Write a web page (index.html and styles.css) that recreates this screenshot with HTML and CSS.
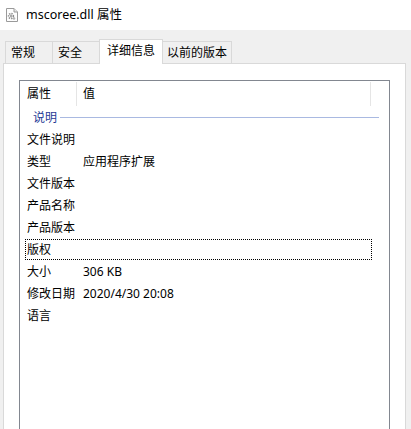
FILE: index.html
```html
<!DOCTYPE html>
<html lang="zh-CN">
<head>
<meta charset="utf-8">
<title>mscoree.dll 属性</title>
<link rel="stylesheet" href="styles.css">
</head>
<body>
<div class="window">
  <div class="titlebar">
    <svg class="appicon" width="12" height="14" viewBox="0 0 12 14">
      <path d="M0.5 0.5 H8 L11.5 4 V13.5 H0.5 Z" fill="#fdfdfd" stroke="#9a9a9a"/>
      <path d="M8 0.5 V4 H11.5" fill="#e8e8e8" stroke="#9a9a9a"/>
      <circle cx="5" cy="8" r="2.4" fill="none" stroke="#8c8c8c" stroke-width="1.6" stroke-dasharray="1.2 0.9"/>
      <circle cx="5" cy="8" r="1.2" fill="#a8a8a8"/>
      <circle cx="8" cy="10.5" r="1.3" fill="#b4b4b4"/>
    </svg>
    <span class="title">mscoree.dll 属性</span>
  </div>
  <div class="tabs">
    <div class="tab t1">常规</div>
    <div class="tab t2">安全</div>
    <div class="tab t3 active">详细信息</div>
    <div class="tab t4">以前的版本</div>
  </div>
  <div class="panel">
    <div class="listview">
      <div class="lv-header">
        <div class="hcell hc1">属性</div>
        <div class="hcell hc2">值</div>
      </div>
      <div class="group">
        <span class="glabel">说明</span>
        <span class="gline"></span>
      </div>
      <div class="row"><div class="item"><span class="c1">文件说明</span><span class="c2"></span></div></div>
      <div class="row"><div class="item"><span class="c1">类型</span><span class="c2">应用程序扩展</span></div></div>
      <div class="row"><div class="item"><span class="c1">文件版本</span><span class="c2"></span></div></div>
      <div class="row"><div class="item"><span class="c1">产品名称</span><span class="c2"></span></div></div>
      <div class="row"><div class="item"><span class="c1">产品版本</span><span class="c2"></span></div></div>
      <div class="row"><div class="item focused"><span class="c1">版权</span><span class="c2"></span></div></div>
      <div class="row"><div class="item"><span class="c1">大小</span><span class="c2">306 KB</span></div></div>
      <div class="row"><div class="item"><span class="c1">修改日期</span><span class="c2">2020/4/30 20:08</span></div></div>
      <div class="row"><div class="item"><span class="c1">语言</span><span class="c2"></span></div></div>
    </div>
  </div>
</div>
</body>
</html>
```
FILE: styles.css
```css
html, body {
  margin: 0;
  padding: 0;
}
body {
  width: 411px;
  height: 429px;
  overflow: hidden;
  background: #f0f0f0;
  font-family: "Segoe UI", "Noto Sans", "Noto Sans CJK SC", sans-serif;
  font-size: 12px;
  color: #000;
}
.window {
  display: flex;
  flex-direction: column;
  height: 429px;
}
.titlebar {
  height: 30px;
  flex: none;
  background: #fff;
  display: flex;
  align-items: center;
  box-sizing: border-box;
  padding-left: 6px;
}
.appicon {
  display: block;
}
.title {
  margin-left: 8px;
  font-size: 12.5px;
  line-height: 16px;
  color: #000;
}
.tabs {
  flex: none;
  display: flex;
  align-items: flex-end;
  height: 24px;
  margin-top: 9px;
  padding-left: 5px;
  position: relative;
  z-index: 1;
}
.tab {
  box-sizing: border-box;
  height: 22px;
  border: 1px solid #d9d9d9;
  border-bottom: none;
  background: #f0f0f0;
  display: flex;
  align-items: center;
  padding-left: 5px;
  line-height: 16px;
  margin-left: -1px;
}
.t1 { width: 48px; margin-left: 0; }
.t2 { width: 48px; }
.t3 { width: 64px; padding-left: 7px; }
.t4 { width: 70px; padding-left: 4px; }
.tab.active {
  height: 25px;
  margin-bottom: -1px;
  background: #fff;
  padding-bottom: 2px;
  position: relative;
}
.panel {
  flex: 1;
  min-height: 0;
  display: flex;
  flex-direction: column;
  margin: 0 5px 0 3px;
  border: 1px solid #d9d9d9;
  border-bottom: none;
  background: #fff;
  box-sizing: border-box;
  padding: 16px 15px 0 15px;
}
.listview {
  flex: 1;
  min-height: 0;
  border: 1px solid #828790;
  border-bottom: none;
  box-sizing: border-box;
  overflow: hidden;
}
.lv-header {
  display: flex;
  height: 25px;
}
.hcell {
  box-sizing: border-box;
  display: flex;
  align-items: center;
  line-height: 16px;
  border-right: 1px solid #e5e5e5;
  margin: 1px 0 0 0;
}
.hc1 { width: 57px; padding-left: 7px; }
.hc2 { width: 294px; padding-left: 6px; }
.group {
  height: 22px;
  display: flex;
  align-items: center;
  padding-left: 13px;
  padding-right: 10px;
  padding-top: 1px;
  box-sizing: border-box;
}
.glabel {
  color: #1e3995;
  line-height: 16px;
}
.gline {
  flex: 1;
  height: 1px;
  background: #a9b9e1;
  margin-left: 3px;
}
.row {
  height: 22px;
  padding-top: 1px;
  padding-left: 5px;
  box-sizing: border-box;
}
.item {
  box-sizing: border-box;
  width: 347px;
  height: 21px;
  border: 1px dotted transparent;
  display: flex;
  align-items: center;
  line-height: 16px;
}
.item.focused {
  border-color: #000;
}
.c1 {
  width: 55px;
  padding-left: 1px;
  box-sizing: border-box;
  flex: none;
}
.c2 {
  padding-left: 2px;
}
```
